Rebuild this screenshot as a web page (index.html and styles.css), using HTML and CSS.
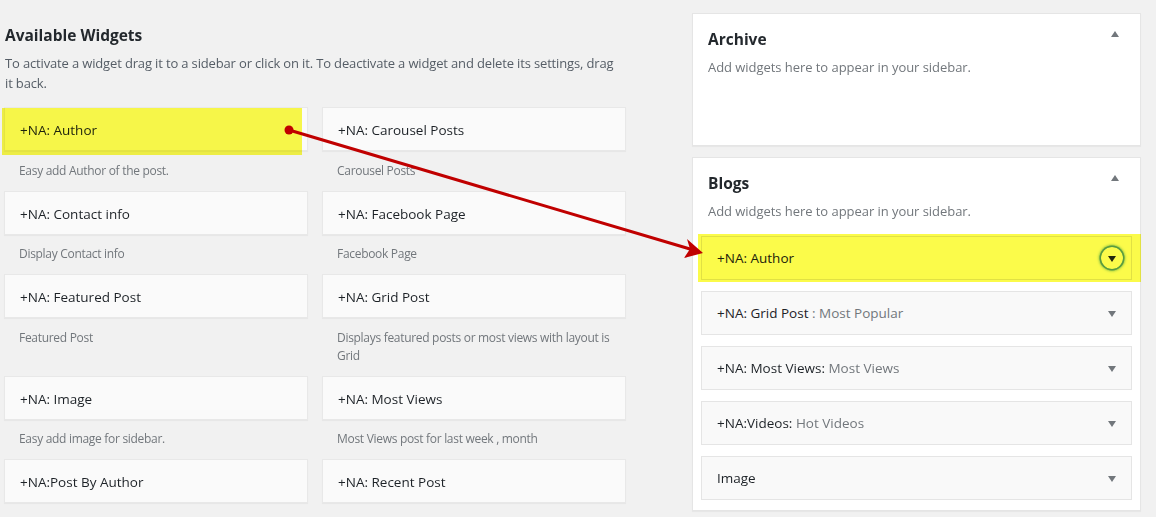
FILE: index.html
```html
<!DOCTYPE html>
<html lang="en">
<head>
<meta charset="utf-8">
<title>Widgets</title>
<link rel="stylesheet" href="styles.css">
</head>
<body>
<div class="page">
  <section class="available">
    <h2 class="section-title">Available Widgets</h2>
    <p class="intro">To activate a widget drag it to a sidebar or click on it. To deactivate a widget and delete its settings, drag it back.</p>
    <div class="widget-grid">
      <div class="widget">
        <div class="widget-top">+NA: Author<span class="hl hl-left"></span></div>
        <p class="widget-desc">Easy add Author of the post.</p>
      </div>
      <div class="widget">
        <div class="widget-top">+NA: Carousel Posts</div>
        <p class="widget-desc">Carousel Posts</p>
      </div>
      <div class="widget">
        <div class="widget-top">+NA: Contact info</div>
        <p class="widget-desc">Display Contact info</p>
      </div>
      <div class="widget">
        <div class="widget-top">+NA: Facebook Page</div>
        <p class="widget-desc">Facebook Page</p>
      </div>
      <div class="widget">
        <div class="widget-top">+NA: Featured Post</div>
        <p class="widget-desc">Featured Post</p>
      </div>
      <div class="widget">
        <div class="widget-top">+NA: Grid Post</div>
        <p class="widget-desc">Displays featured posts or most views with layout is Grid</p>
      </div>
      <div class="widget">
        <div class="widget-top">+NA: Image</div>
        <p class="widget-desc">Easy add image for sidebar.</p>
      </div>
      <div class="widget">
        <div class="widget-top">+NA: Most Views</div>
        <p class="widget-desc">Most Views post for last week , month</p>
      </div>
      <div class="widget">
        <div class="widget-top">+NA:Post By Author</div>
      </div>
      <div class="widget">
        <div class="widget-top">+NA: Recent Post</div>
      </div>
    </div>
  </section>

  <aside class="sidebars">
    <div class="sidebar sidebar-archive">
      <div class="sidebar-head">
        <h2 class="sidebar-name">Archive</h2>
        <span class="tri-up"></span>
      </div>
      <p class="sidebar-desc">Add widgets here to appear in your sidebar.</p>
    </div>
    <div class="sidebar sidebar-blogs">
      <div class="sidebar-head">
        <h2 class="sidebar-name">Blogs</h2>
        <span class="tri-up"></span>
      </div>
      <p class="sidebar-desc">Add widgets here to appear in your sidebar.</p>
      <div class="placed-list">
        <div class="placed placed-active">
          <span class="placed-title">+NA: Author</span>
          <span class="toggle toggle-ring"><span class="tri-down dark"></span></span>
          <span class="hl hl-right"></span>
        </div>
        <div class="placed">
          <span class="placed-title">+NA: Grid Post <span class="in-title">: Most Popular</span></span>
          <span class="toggle"><span class="tri-down"></span></span>
        </div>
        <div class="placed">
          <span class="placed-title">+NA: Most Views:<span class="in-title"> Most Views</span></span>
          <span class="toggle"><span class="tri-down"></span></span>
        </div>
        <div class="placed">
          <span class="placed-title">+NA:Videos:<span class="in-title"> Hot Videos</span></span>
          <span class="toggle"><span class="tri-down"></span></span>
        </div>
        <div class="placed">
          <span class="placed-title">Image</span>
          <span class="toggle"><span class="tri-down"></span></span>
        </div>
      </div>
    </div>
  </aside>

  <svg class="drag-arrow" width="1156" height="517" viewBox="0 0 1156 517" aria-hidden="true">
    <line x1="289" y1="130" x2="690" y2="249" stroke="#c00000" stroke-width="3" stroke-linecap="round"/>
    <circle cx="289" cy="130" r="4.5" fill="#c00000"/>
    <polygon points="703,253 684,258 690,249 687,239" fill="#c00000"/>
  </svg>
</div>
</body>
</html>
```

FILE: styles.css
```css
* { box-sizing: border-box; }

html, body {
  margin: 0;
  padding: 0;
  background: #f1f1f1;
}

body {
  font-family: "Open Sans", "Noto Sans", "Liberation Sans", sans-serif;
  color: #23282d;
  width: 1156px;
  height: 517px;
  overflow: hidden;
}

.page {
  position: relative;
  display: flex;
  align-items: flex-start;
  height: 517px;
}

/* ---------- Available widgets ---------- */
.available {
  width: 622px;
  margin-left: 4px;
  padding-top: 24px;
}

.section-title {
  margin: 0 0 0 1px;
  font-size: 15.5px;
  line-height: 22px;
  font-weight: 700;
  color: #23282d;
}

.intro {
  max-width: 614px;
  margin: 7px 0 14px 1px;
  font-size: 13px;
  line-height: 20px;
  letter-spacing: -0.15px;
  color: #555d66;
}

.widget-grid {
  display: grid;
  grid-template-columns: 304px 304px;
  column-gap: 14px;
}

.widget-top {
  position: relative;
  height: 44px;
  padding: 2px 15px 0;
  display: flex;
  align-items: center;
  background: #fafafa;
  border: 1px solid #e8e8e8;
  box-shadow: 0 1px 1px rgba(0, 0, 0, 0.04);
  font-size: 13.5px;
  font-weight: 500;
  color: #1d2227;
}

.widget-desc {
  margin: 0;
  padding: 10.5px 10px 11px 15px;
  font-size: 12px;
  line-height: 18px;
  letter-spacing: -0.3px;
  color: #72777c;
}

/* ---------- Sidebars ---------- */
.sidebars {
  width: 449px;
  margin-left: 66px;
  padding-top: 13px;
  display: flex;
  flex-direction: column;
  gap: 11px;
}

.sidebar {
  background: #fff;
  border: 1px solid #e5e5e5;
  box-shadow: 0 1px 1px rgba(0, 0, 0, 0.04);
}

.sidebar-archive {
  height: 133px;
}

.sidebar-head {
  display: flex;
  align-items: center;
  justify-content: space-between;
  padding: 14px 21px 0 15px;
}

.sidebar-name {
  margin: 0;
  font-size: 15.5px;
  line-height: 22px;
  font-weight: 700;
  color: #23282d;
}

.sidebar-desc {
  margin: 7px 0 0 15px;
  font-size: 13px;
  line-height: 20px;
  letter-spacing: -0.05px;
  color: #72777c;
}

.tri-up {
  width: 0;
  height: 0;
  border-left: 4.5px solid transparent;
  border-right: 4.5px solid transparent;
  border-bottom: 6px solid #72777c;
  margin-top: -10px;
}

.placed-list {
  display: flex;
  flex-direction: column;
  gap: 11px;
  padding: 15px 8px 10px;
}

.placed {
  position: relative;
  height: 44px;
  display: flex;
  align-items: center;
  justify-content: space-between;
  padding: 0 8px 0 15px;
  background: #f9f9f9;
  border: 1px solid #e5e5e5;
  font-size: 13.5px;
  font-weight: 500;
  color: #1d2227;
}

.placed-active {
  background: #fff;
}

.in-title {
  font-weight: 400;
  color: #72777c;
}

.toggle {
  width: 22px;
  height: 22px;
  display: flex;
  align-items: center;
  justify-content: center;
  border-radius: 50%;
}

.toggle-ring {
  box-shadow: 0 0 0 1.5px #5b9dd9, 0 0 3px 1.5px rgba(30, 140, 190, 0.8);
}

.tri-down {
  width: 0;
  height: 0;
  border-left: 4.5px solid transparent;
  border-right: 4.5px solid transparent;
  border-top: 6px solid #72777c;
  margin-top: 1px;
}

.tri-down.dark {
  border-top-color: #23282d;
}

/* ---------- highlighter marks ---------- */
.hl {
  position: absolute;
  background: #fbfb4a;
  mix-blend-mode: multiply;
  pointer-events: none;
}

.hl-left {
  left: -3px;
  top: 0;
  width: 300px;
  height: 47px;
}

.hl-right {
  left: -4px;
  right: -10px;
  top: -3px;
  bottom: -3px;
}

.drag-arrow {
  position: absolute;
  left: 0;
  top: 0;
  pointer-events: none;
  z-index: 5;
}
```
